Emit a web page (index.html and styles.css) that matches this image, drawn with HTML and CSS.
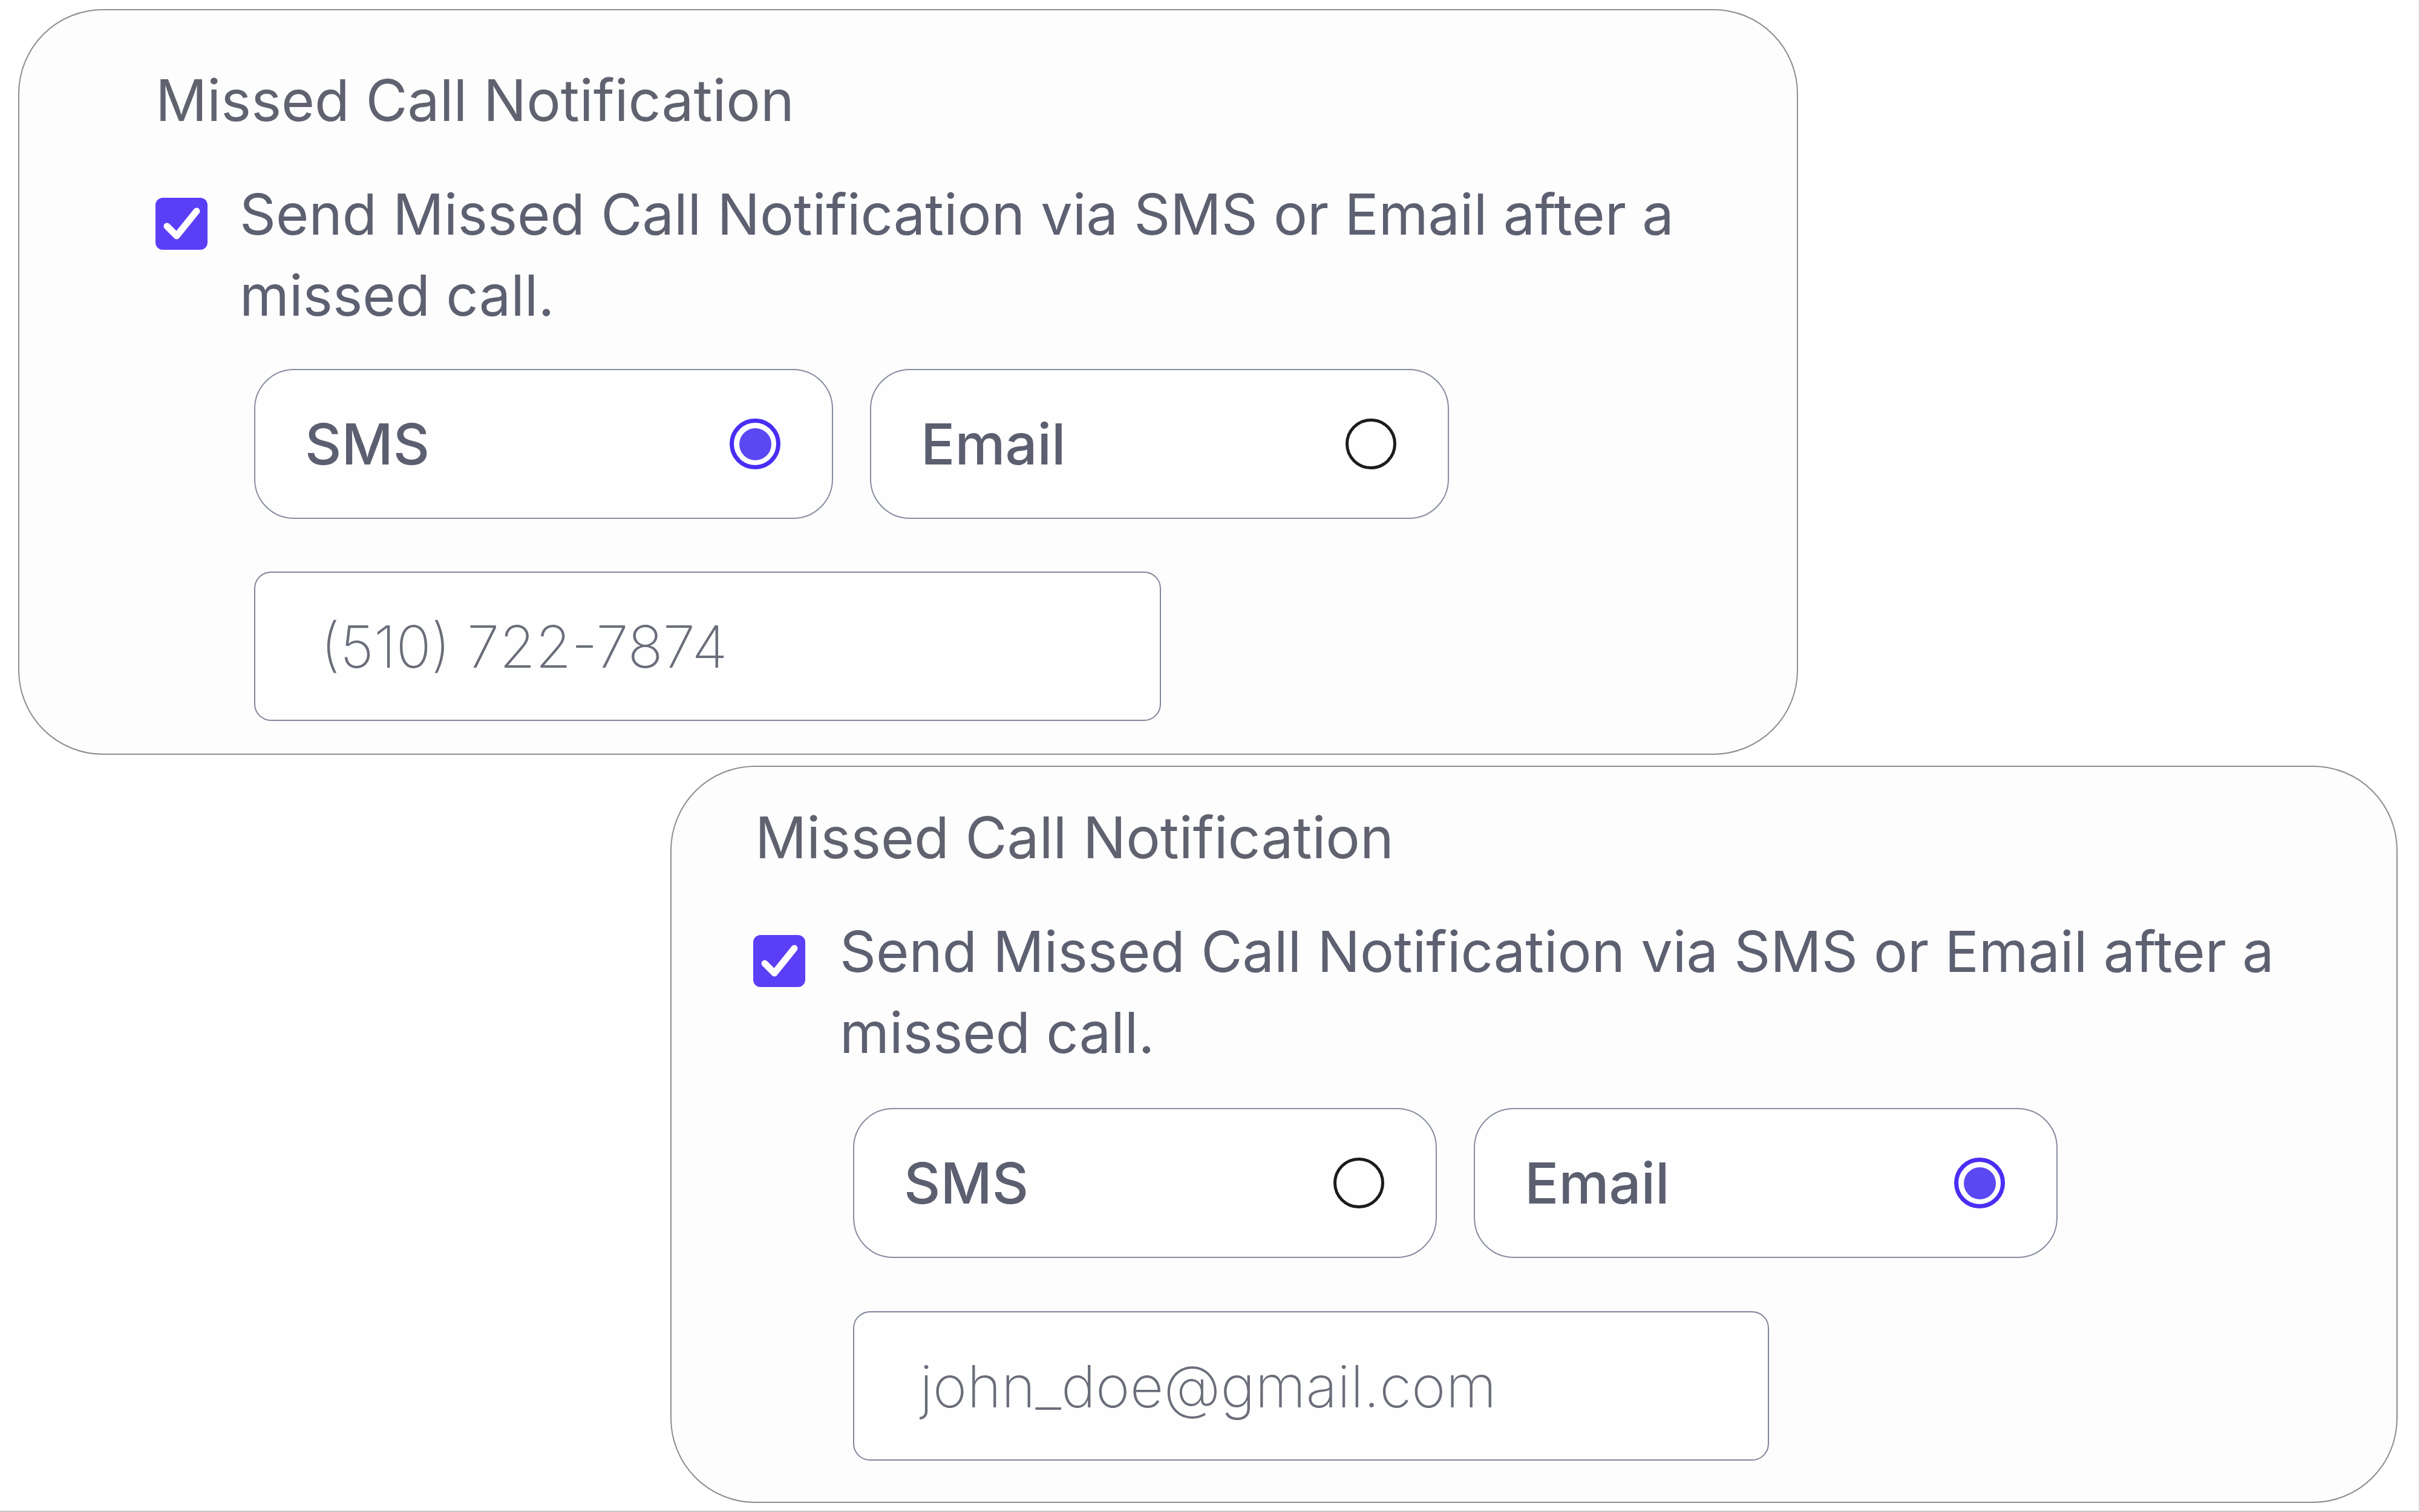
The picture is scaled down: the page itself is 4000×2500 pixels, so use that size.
FILE: index.html
```html
<!DOCTYPE html>
<html lang="en">
<head>
    <meta charset="UTF-8" />
    <title>Missed Call Notification</title>
    <link rel="stylesheet" href="styles.css">
</head>
<body>
    <div class="page">
        <!-- SMS gekozen -->
        <section class="card card--sms">
            <h3 class="card-title">Missed Call Notification</h3>
            <div class="option">
                <span class="checkbox">
                    <svg width="86" height="86" viewBox="0 0 86 86"><path d="M19 47 L35 63 L68 22" fill="none" stroke="#fff" stroke-width="11" stroke-linecap="round" stroke-linejoin="round"/></svg>
                </span>
                <div class="option-body">
                    <p class="option-text">Send Missed Call Notification via SMS or Email after a missed call.</p>
                    <div class="channels">
                        <div class="channel"><span>SMS</span><span class="radio radio--on"></span></div>
                        <div class="channel"><span>Email</span><span class="radio"></span></div>
                    </div>
                    <input class="field" type="text" placeholder="(510) 722-7874">
                </div>
            </div>
        </section>

        <!-- Email gekozen -->
        <section class="card card--email">
            <h3 class="card-title">Missed Call Notification</h3>
            <div class="option">
                <span class="checkbox">
                    <svg width="86" height="86" viewBox="0 0 86 86"><path d="M19 47 L35 63 L68 22" fill="none" stroke="#fff" stroke-width="11" stroke-linecap="round" stroke-linejoin="round"/></svg>
                </span>
                <div class="option-body">
                    <p class="option-text">Send Missed Call Notification via SMS or Email after a missed call.</p>
                    <div class="channels">
                        <div class="channel"><span>SMS</span><span class="radio"></span></div>
                        <div class="channel"><span>Email</span><span class="radio radio--on"></span></div>
                    </div>
                    <input class="field" type="text" placeholder="john_doe@gmail.com">
                </div>
            </div>
        </section>
    </div>
</body>
</html>
```

FILE: styles.css
```css
* {
    box-sizing: border-box;
}

body {
    margin: 0;
    font-family: Inter, "Noto Sans", sans-serif;
    background: #ffffff;
    color: #5d6070;
}

.page {
    width: 4000px;
    height: 2500px;
    display: flex;
    flex-direction: column;
    align-items: flex-start;
    border-right: 2px solid #d4d4d6;
    border-bottom: 2px solid #c6c6c8;
}

.card {
    background: #fdfdfe;
    border: 2px solid #8e8c93;
    border-radius: 140px;
}

.card--sms {
    margin: 15px 0 0 30px;
    width: 2942px;
    height: 1233px;
    padding: 94px 0 0 225px;
}

.card--email {
    margin: 18px 0 0 1108px;
    width: 2855px;
    height: 1219px;
    padding: 62px 0 0 135px;
}

.card-title {
    margin: 0 0 66px 0;
    font-size: 94.5px;
    font-weight: 400;
    line-height: 110px;
    color: #60636f;
}

    .card--email .card-title {
        margin-left: 3px;
    }

.option {
    display: flex;
    gap: 53px;
}

    .card--email .option {
        gap: 57px;
    }

.checkbox {
    flex: none;
    width: 86px;
    height: 86px;
    margin-top: 40px;
    border-radius: 12px;
    background: #5b3ff6;
}

    .checkbox svg {
        display: block;
    }

.option-text {
    margin: 0;
    width: 2460px;
    font-size: 93.5px;
    line-height: 134px;
}

.channels {
    display: flex;
    gap: 61px;
    margin: 55px 0 0 24px;
}

    .card--email .channels {
        margin: 58px 0 0 22px;
    }

.channel {
    width: 957px;
    height: 248px;
    padding: 0 85px 0 82px;
    border: 2px solid #878da0;
    border-radius: 66px;
    background: #fefefe;
    display: flex;
    align-items: center;
    justify-content: space-between;
    font-size: 93.5px;
    font-weight: 500;
    color: #5b5f70;
}

    .card--email .channel {
        width: 965px;
    }

.radio {
    flex: none;
    width: 84px;
    height: 84px;
    border: 5px solid #1c1c1f;
    border-radius: 50%;
    display: flex;
    align-items: center;
    justify-content: center;
}

    .radio--on {
        border: 7px solid #4a2ef3;
    }

        .radio--on::after {
            content: "";
            width: 53px;
            height: 53px;
            border-radius: 50%;
            background: #5a48f2;
        }

.field {
    display: block;
    margin: 87px 0 0 24px;
    width: 1499px;
    height: 247px;
    padding: 0 0 0 108px;
    border: 2px solid #80869a;
    border-radius: 28px;
    background: #fefefe;
    font-family: Inter, "Noto Sans", sans-serif;
    font-size: 96.5px;
    font-weight: 250;
    color: #5d6070;
    outline: none;
}

    .card--email .field {
        margin: 88px 0 0 22px;
        width: 1514px;
    }

    .field::placeholder {
        color: #6a6d7a;
    }
```
